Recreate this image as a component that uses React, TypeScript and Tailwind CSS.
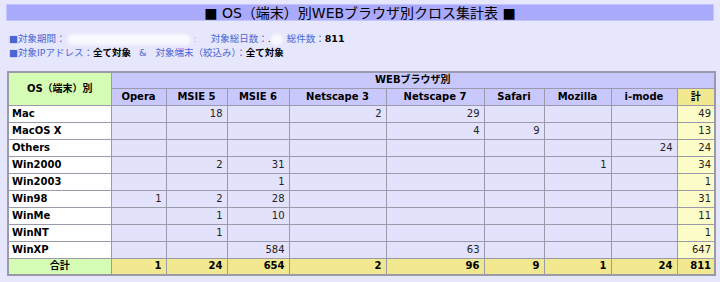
const browsers = ["Opera", "MSIE 5", "MSIE 6", "Netscape 3", "Netscape 7", "Safari", "Mozilla", "i-mode"];
const colWidths = [103, 55, 61, 62, 97, 98, 60, 67, 66, 38];

// values per OS row, in browser order, then row total
const rows: { os: string; cells: (number | null)[]; total: number }[] = [
  { os: "Mac", cells: [null, 18, null, 2, 29, null, null, null], total: 49 },
  { os: "MacOS X", cells: [null, null, null, null, 4, 9, null, null], total: 13 },
  { os: "Others", cells: [null, null, null, null, null, null, null, 24], total: 24 },
  { os: "Win2000", cells: [null, 2, 31, null, null, null, 1, null], total: 34 },
  { os: "Win2003", cells: [null, null, 1, null, null, null, null, null], total: 1 },
  { os: "Win98", cells: [1, 2, 28, null, null, null, null, null], total: 31 },
  { os: "WinMe", cells: [null, 1, 10, null, null, null, null, null], total: 11 },
  { os: "WinNT", cells: [null, 1, null, null, null, null, null, null], total: 1 },
  { os: "WinXP", cells: [null, null, 584, null, 63, null, null, null], total: 647 },
];

const sums = [1, 24, 654, 2, 96, 9, 1, 24];

const font = { fontFamily: '"DejaVu Sans", "Noto Sans CJK JP", sans-serif' };

export default function App() {
  return (
    <div className="w-[720px] h-[282px] bg-[#e6e6fc] overflow-hidden pt-1" style={font}>
      {/* Title bar */}
      <div className="mx-[6px] h-[17px] bg-[#aaaafc] border border-[#c4c4fc] flex items-center justify-center text-[14px] leading-none text-black">
        ■ OS（端末）別WEBブラウザ別クロス集計表 ■
      </div>

      {/* Info lines */}
      <div className="px-[9px] pt-[11px] text-[9.5px] leading-[14px] text-[#4a66d4]">
        <div className="flex items-center">
          <span>■対象期間：</span>
          <span className="w-[124px] h-[11px] ml-[2px] bg-[#f8f8ff] rounded-full blur-[1.5px]" />
          <span className="ml-[2px] text-[#b4b4e0]">:</span>
          <span className="ml-[14px]">対象総日数：</span>
          <span className="text-black">.</span>
          <span className="w-[12px] h-[11px] bg-[#f8f8ff] rounded-full blur-[1.5px]" />
          <span className="ml-[4px]">総件数：</span>
          <span className="text-black font-bold">811</span>
        </div>
        <div className="flex items-center">
          <span>■対象IPアドレス：</span>
          <span className="text-black font-bold">全て対象</span>
          <span className="ml-[8px]">&amp;</span>
          <span className="ml-[9px]">対象端末（絞込み）：</span>
          <span className="text-black font-bold">全て対象</span>
        </div>
      </div>

      {/* Cross table */}
      <table
        className="mt-[11px] ml-[7px] border-collapse table-fixed border-2 border-[#9a9aaa] text-[10px] leading-none text-black"
        style={{ width: 707 }}
      >
        <colgroup>
          {colWidths.map((w, i) => (
            <col key={i} style={{ width: w }} />
          ))}
        </colgroup>
        <thead>
          <tr className="h-[16px]">
            <th rowSpan={2} className="border border-[#9a9aaa] bg-[#d4fcb4] font-bold text-center">
              OS（端末）別
            </th>
            <th colSpan={9} className="border border-[#9a9aaa] bg-[#c8c8fc] font-bold text-center">
              WEBブラウザ別
            </th>
          </tr>
          <tr className="h-[17px]">
            {browsers.map((b) => (
              <th key={b} className="border border-[#9a9aaa] bg-[#c8c8fc] font-bold text-center">
                {b}
              </th>
            ))}
            <th className="border border-[#9a9aaa] bg-[#f2e890] font-bold text-center">計</th>
          </tr>
        </thead>
        <tbody>
          {rows.map((r) => (
            <tr key={r.os} className="h-[17px]">
              <td className="border border-[#9a9aaa] bg-white font-bold pl-[3px]">{r.os}</td>
              {r.cells.map((c, i) => (
                <td key={i} className="border border-[#9a9aaa] bg-[#e2e2fc] text-right pr-[4px] text-[#222]">
                  {c ?? ""}
                </td>
              ))}
              <td className="border border-[#9a9aaa] bg-[#fcfcc8] text-right pr-[3px] text-[#222]">{r.total}</td>
            </tr>
          ))}
          <tr className="h-[17px]">
            <td className="border border-[#9a9aaa] bg-[#d4fcb4] font-bold text-center">合計</td>
            {sums.map((s, i) => (
              <td key={i} className="border border-[#9a9aaa] bg-[#f2e890] font-bold text-right pr-[4px]">
                {s}
              </td>
            ))}
            <td className="border border-[#9a9aaa] bg-[#f2e890] font-bold text-right pr-[3px]">811</td>
          </tr>
        </tbody>
      </table>
    </div>
  );
}
